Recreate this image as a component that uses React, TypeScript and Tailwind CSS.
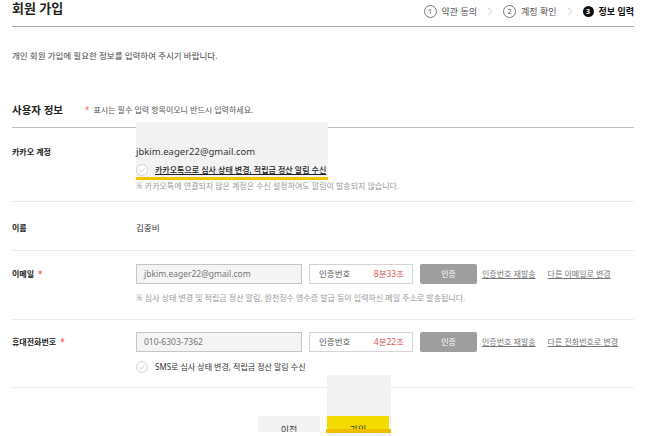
import React from "react";

const FONT = { fontFamily: '"Noto Sans", "Noto Sans CJK KR", sans-serif' };

function Chevron() {
  return (
    <svg width="6" height="9" viewBox="0 0 6 9" className="mx-[10px]">
      <polyline points="1,1 5,4.5 1,8" fill="none" stroke="#c8c8c8" strokeWidth="0.9" />
    </svg>
  );
}

function StepNum({ n, active = false }: { n: number; active?: boolean }) {
  return active ? (
    <span className="flex size-[11px] items-center justify-center rounded-full bg-[#111] text-[7px] font-bold leading-none text-white">
      {n}
    </span>
  ) : (
    <span className="flex size-[13px] items-center justify-center rounded-full border border-[#777] text-[7.5px] leading-none text-[#555]">
      {n}
    </span>
  );
}

function CheckCircle() {
  return (
    <svg width="12" height="12" viewBox="0 0 12 12" className="shrink-0">
      <circle cx="6" cy="6" r="5.4" fill="#fff" stroke="#cfcfcf" strokeWidth="0.9" />
      <polyline points="3.4,6.1 5.3,7.9 8.7,4.4" fill="none" stroke="#c4c4c4" strokeWidth="0.9" />
    </svg>
  );
}

function Req() {
  return <span className="ml-[4px] text-[8px] text-[#f06a6a]">*</span>;
}

function VerifyGroup({ value, timer, altLink }: { value: string; timer: string; altLink: string }) {
  return (
    <div className="flex h-[20px] items-center">
      <div className="flex h-full w-[166px] items-center border border-[#c4c4c4] bg-[#f4f4f4] px-[7px] text-[8.5px] text-[#777]">
        {value}
      </div>
      <div className="ml-[7px] flex h-full w-[104px] items-center justify-between border border-[#d4d4d4] bg-white pl-[9px] pr-[8px] text-[8.5px]">
        <span className="text-[#555]">인증번호</span>
        <span className="text-[#e05454]">{timer}</span>
      </div>
      <div className="ml-[7px] flex h-full w-[57px] items-center justify-center rounded-[2px] bg-[#9e9e9e] text-[8px] text-white">
        인증
      </div>
      <span className="ml-[5px] text-[8px] text-[#777] underline">인증번호 재발송</span>
      <span className="ml-[12px] text-[8px] text-[#777] underline">{altLink}</span>
    </div>
  );
}

export default function App() {
  return (
    <div className="relative h-[436px] w-[646px] overflow-hidden bg-white text-[#333]" style={FONT}>
      {/* highlight overlays */}
      <div className="absolute left-[136px] top-[122px] z-[1] h-[58px] w-[192px] bg-[#f3f3f3]" />
      <div className="absolute left-[136px] top-[177px] z-[3] h-[3px] w-[192px] bg-[#f3c300]" />
      <div className="absolute left-[327px] top-[375px] z-[1] h-[61px] w-[64px] bg-[#f3f3f3]" />
      <div className="absolute left-[326px] top-[429px] z-[3] h-[4px] w-[65px] bg-[#f2bd00]" />

      <div className="px-[12px]">
        {/* header */}
        <div className="flex h-[27px] items-start justify-between border-b border-[#a6a6a6]">
          <h1 className="text-[13px] font-bold leading-[16px] text-[#222]">회원 가입</h1>
          <div className="mt-[5px] flex items-center text-[9px] leading-none">
            <StepNum n={1} />
            <span className="ml-[5px] text-[#555]">약관 동의</span>
            <Chevron />
            <StepNum n={2} />
            <span className="ml-[5px] text-[#555]">계정 확인</span>
            <Chevron />
            <StepNum n={3} active />
            <span className="ml-[5px] font-bold text-[#111]">정보 입력</span>
          </div>
        </div>

        <p className="mt-[22px] text-[8.5px] leading-[14px] text-[#444]">
          개인 회원 가입에 필요한 정보를 입력하여 주시기 바랍니다.
        </p>

        {/* section title */}
        <div className="mt-[40px] flex items-center border-b border-[#bdbdbd] pb-[10px]">
          <h2 className="w-[73px] text-[10.5px] font-bold leading-[14px] text-[#222]">사용자 정보</h2>
          <span className="text-[8px] text-[#f06a6a]">*</span>
          <span className="ml-[4px] text-[8px] text-[#555]">표시는 필수 입력 항목이오니 반드시 입력하세요.</span>
        </div>

        {/* kakao */}
        <div className="flex border-b border-[#ececec] pb-[10px] pt-[17px]">
          <div className="w-[124px] shrink-0 text-[8px] font-bold leading-[13px] text-[#222]">카카오 계정</div>
          <div className="relative z-[2]">
            <div className="text-[9.5px] leading-[13px] text-[#333]">jbkim.eager22@gmail.com</div>
            <div className="mt-[5px] flex h-[14px] items-center gap-[7px]">
              <CheckCircle />
              <span className="text-[8px] font-medium text-[#222] underline">
                카카오톡으로 심사 상태 변경, 적립금 정산 알림 수신
              </span>
            </div>
            <div className="mt-[3px] text-[8px] leading-[11px] text-[#999]">
              ※ 카카오톡에 연결되지 않은 계정은 수신 설정하여도 알림이 발송되지 않습니다.
            </div>
          </div>
        </div>

        {/* name */}
        <div className="flex border-b border-[#ececec] pb-[16px] pt-[19px]">
          <div className="w-[124px] shrink-0 text-[8px] font-bold leading-[13px] text-[#222]">이름</div>
          <div className="text-[8.5px] leading-[13px] text-[#333]">김중비</div>
        </div>

        {/* email */}
        <div className="flex border-b border-[#ececec] pb-[16px] pt-[13px]">
          <div className="flex h-[20px] w-[124px] shrink-0 items-center text-[8px] font-bold text-[#222]">
            이메일
            <Req />
          </div>
          <div>
            <VerifyGroup value="jbkim.eager22@gmail.com" timer="8분33초" altLink="다른 이메일로 변경" />
            <div className="mt-[8px] text-[8px] leading-[11px] text-[#999]">
              ※ 심사 상태 변경 및 적립금 정산 알림, 원천징수 영수증 발급 등이 입력하신 메일 주소로 발송됩니다.
            </div>
          </div>
        </div>

        {/* phone */}
        <div className="flex border-b border-[#ececec] pb-[13px] pt-[12px]">
          <div className="flex h-[20px] w-[124px] shrink-0 items-center text-[8px] font-bold text-[#222]">
            휴대전화번호
            <Req />
          </div>
          <div>
            <VerifyGroup value="010-6303-7362" timer="4분22초" altLink="다른 전화번호로 변경" />
            <div className="mt-[8px] flex h-[14px] items-center gap-[7px]">
              <CheckCircle />
              <span className="text-[8px] text-[#333]">SMS로 심사 상태 변경, 적립금 정산 알림 수신</span>
            </div>
          </div>
        </div>

        {/* buttons */}
        <div className="mt-[28px] flex h-[16px] justify-center gap-[7px] overflow-hidden pl-[1px]">
          <div className="flex h-[28px] w-[62px] shrink-0 items-center justify-center bg-[#f3f3f3] text-[9px] text-[#444]">
            이전
          </div>
          <div className="relative z-[2] flex h-[28px] w-[62px] shrink-0 items-center justify-center bg-[#f5dc00] text-[9px] text-[#333]">
            가입
          </div>
        </div>
      </div>
    </div>
  );
}
